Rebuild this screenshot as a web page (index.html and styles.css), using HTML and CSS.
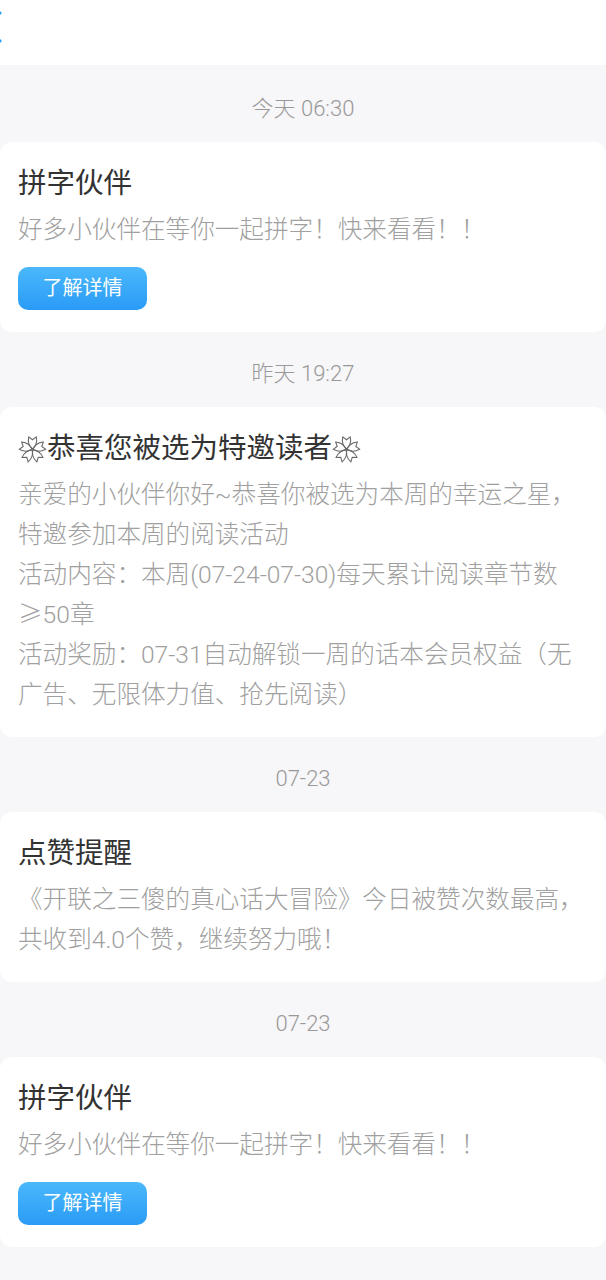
FILE: index.html
```html
<!DOCTYPE html>
<html lang="zh-CN">
<head>
    <meta charset="UTF-8">
    <title>消息</title>
    <link rel="stylesheet" href="styles.css">
</head>
<body>
<div class="header">
    <svg class="back" width="22" height="54" viewBox="0 0 22 54">
        <path d="M20 13 L2 27 L20 41" fill="none" stroke="#2a9ef5" stroke-width="3" stroke-linecap="round"/>
    </svg>
</div>
<div class="list">
    <div class="date">今天 06:30</div>
    <div class="card">
        <div class="title">拼字伙伴</div>
        <div class="text">好多小伙伴在等你一起拼字！快来看看！！</div>
        <a class="btn">了解详情</a>
    </div>

    <div class="date">昨天 19:27</div>
    <div class="card">
        <div class="title">
            <svg class="flower" viewBox="0 0 24 24"><g id="fl"><path d="M12 11.5 C8.8 9 8.2 5 8.9 1.6 L12 3.9 L15.1 1.6 C15.8 5 15.2 9 12 11.5 Z"/><path transform="rotate(72 12 12)" d="M12 11.5 C8.8 9 8.2 5 8.9 1.6 L12 3.9 L15.1 1.6 C15.8 5 15.2 9 12 11.5 Z"/><path transform="rotate(144 12 12)" d="M12 11.5 C8.8 9 8.2 5 8.9 1.6 L12 3.9 L15.1 1.6 C15.8 5 15.2 9 12 11.5 Z"/><path transform="rotate(216 12 12)" d="M12 11.5 C8.8 9 8.2 5 8.9 1.6 L12 3.9 L15.1 1.6 C15.8 5 15.2 9 12 11.5 Z"/><path transform="rotate(288 12 12)" d="M12 11.5 C8.8 9 8.2 5 8.9 1.6 L12 3.9 L15.1 1.6 C15.8 5 15.2 9 12 11.5 Z"/></g></svg>恭喜您被选为特邀读者<svg class="flower" viewBox="0 0 24 24"><use href="#fl"/></svg>
        </div>
        <div class="text">亲爱的小伙伴你好~恭喜你被选为本周的幸运之星，<br>特邀参加本周的阅读活动<br>活动内容：本周(07-24-07-30)每天累计阅读章节数<br><span class="cjk">≥</span>50章<br>活动奖励：07-31自动解锁一周的话本会员权益（无<br>广告、无限体力值、抢先阅读）</div>
    </div>

    <div class="date">07-23</div>
    <div class="card">
        <div class="title">点赞提醒</div>
        <div class="text">《开联之三傻的真心话大冒险》今日被赞次数最高，<br>共收到4.0个赞，继续努力哦！</div>
    </div>

    <div class="date">07-23</div>
    <div class="card">
        <div class="title">拼字伙伴</div>
        <div class="text">好多小伙伴在等你一起拼字！快来看看！！</div>
        <a class="btn">了解详情</a>
    </div>
</div>
</body>
</html>
```

FILE: styles.css
```css
* {
    padding: 0;
    margin: 0;
    box-sizing: border-box;
}

body {
    background: #f7f6f8;
    font-family: Roboto, "Noto Sans CJK SC", sans-serif;
    overflow: hidden;
}

.header {
    height: 65px;
    background: #fff;
    overflow: hidden;
}

.back {
    display: block;
    margin-left: -20px;
}

.list {
    padding: 2px 0 40px;
}

.date {
    padding: 30px 0 21px;
    height: 75px;
    line-height: 24px;
    font-size: 22px;
    font-weight: 300;
    color: #999;
    text-align: center;
}

.card {
    background: #fff;
    border-radius: 12px;
    padding: 24px 6px 22px 18px;
}

.title {
    height: 36px;
    font-size: 28.5px;
    line-height: 36px;
    color: #333;
    display: flex;
    align-items: center;
}

.flower {
    width: 29px;
    height: 29px;
    fill: none;
    stroke: #666;
    stroke-width: 0.9;
}

.text {
    margin-top: 8px;
    font-size: 24.6px;
    line-height: 40px;
    font-weight: 300;
    color: #a0a0a0;
    white-space: nowrap;
}

.cjk {
    font-family: "Noto Sans CJK SC", sans-serif;
    line-height: 1;
}

.btn {
    display: block;
    width: 129px;
    height: 43px;
    margin-top: 17px;
    border-radius: 10px;
    background: linear-gradient(#4bb8fb, #2a9bf6);
    color: #fff;
    font-size: 20px;
    line-height: 43px;
    text-align: center;
}
```
